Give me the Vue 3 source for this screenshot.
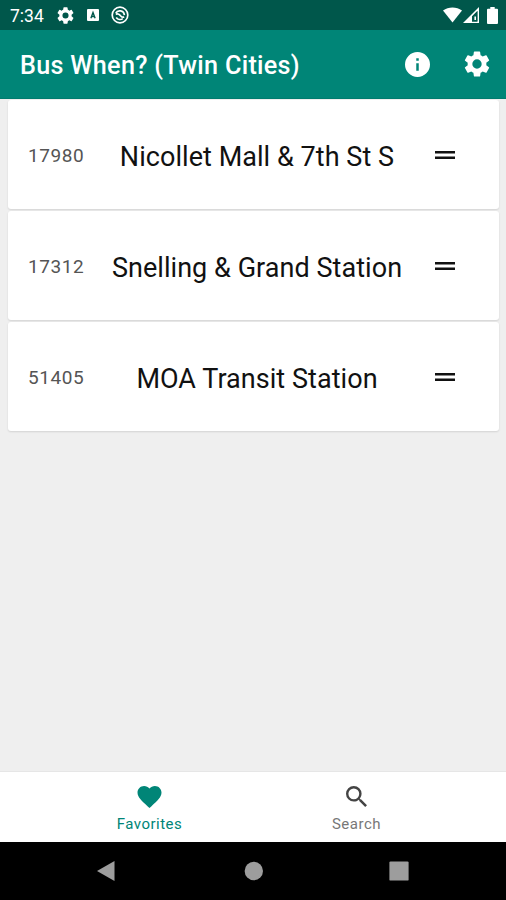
<script setup>
import { ref } from 'vue'

const stops = ref([
    { id: '17980', name: 'Nicollet Mall & 7th St S' },
    { id: '17312', name: 'Snelling & Grand Station' },
    { id: '51405', name: 'MOA Transit Station' }
])

const tab = ref('favorites')
const gearPath =
    'M19.14 12.94c.04-.3.06-.61.06-.94s-.02-.64-.07-.94l2.03-1.58a.49.49 0 0 0 .12-.61l-1.92-3.32a.49.49 0 0 0-.59-.22l-2.39.96a7 7 0 0 0-1.62-.94l-.36-2.54A.48.48 0 0 0 13.92 2.4h-3.84a.48.48 0 0 0-.48.41l-.36 2.54a7.3 7.3 0 0 0-1.62.94l-2.39-.96a.49.49 0 0 0-.59.22L2.72 8.87a.48.48 0 0 0 .12.61l2.03 1.58c-.05.3-.07.62-.07.94s.02.64.07.94l-2.03 1.58a.49.49 0 0 0-.12.61l1.92 3.32c.12.22.37.29.59.22l2.39-.96c.5.38 1.03.7 1.62.94l.36 2.54c.05.24.24.41.48.41h3.84c.24 0 .44-.17.48-.41l.36-2.54a7.3 7.3 0 0 0 1.62-.94l2.39.96c.22.08.47 0 .59-.22l1.92-3.32a.48.48 0 0 0-.12-.61zM12 15.6A3.6 3.6 0 1 1 12 8.4a3.6 3.6 0 0 1 0 7.2z'
</script>
<template>
    <div class="screen">
        <header class="status-bar">
            <span class="clock">7:34</span>
            <svg class="status-gear" viewBox="2 2 20 20"><path :d="gearPath" /></svg>
            <svg class="status-app" viewBox="0 0 12 12">
                <rect width="12" height="12" rx="1" />
                <path class="letter" d="M3.9 9.2 6 3.6l2.1 5.6M4.7 7.5h2.6" />
            </svg>
            <svg class="status-sync" viewBox="0 0 18 18">
                <circle cx="9" cy="9" r="7.8" />
                <path d="M4.8 7.2C6.6 3.6 12.8 4 13.4 9.2M4.8 8.4c2.4-1.6 4 .2 5 1.6 1 1.2 2.2 1.4 3.4 1M5.2 11.4c1.6 2.2 4.6 2.6 6.6 1.2" />
            </svg>
            <div class="status-right">
                <svg class="wifi" viewBox="0 0 20 16">
                    <path d="M0 3.3C5.8-1 14.2-1 20 3.3L10 15.8z" />
                </svg>
                <svg class="signal" viewBox="0 0 16 16">
                    <path fill-rule="evenodd" d="M16 0v16H0zM14.4 4 9 9.4v5h5.4z" />
                    <path class="shade" d="M14.4 4 9 9.4v5h5.4z" />
                    <path d="M11.4 9.4h1.6v3.6h-1.6z" />
                </svg>
                <svg class="battery" viewBox="0 0 11 17">
                    <path d="M3.3 0h4.4v1.8H10q1 0 1 1V16q0 1-1 1H1q-1 0-1-1V2.8q0-1 1-1h2.3z" />
                </svg>
            </div>
        </header>

        <div class="app-bar">
            <h1>Bus When? (Twin Cities)</h1>
            <svg class="info" viewBox="2 2 20 20">
                <path d="M12 2a10 10 0 1 0 0 20 10 10 0 0 0 0-20zm1 15h-2v-6h2zm0-8h-2V7h2z" />
            </svg>
            <svg class="settings" viewBox="2 2 20 20"><path :d="gearPath" /></svg>
        </div>

        <main class="stop-list">
            <div class="stop" v-for="stop in stops" :key="stop.id">
                <span class="stop-id">{{ stop.id }}</span>
                <span class="stop-name">{{ stop.name }}</span>
                <svg class="handle" viewBox="0 0 20 8">
                    <path d="M0 0h20v2.4H0zM0 5.6h20V8H0z" />
                </svg>
            </div>
        </main>

        <nav class="tabs">
            <div class="tab" :class="{ active: tab === 'favorites' }" @click="tab = 'favorites'">
                <svg class="heart" viewBox="2 3 20 18.35">
                    <path d="m12 21.35-1.45-1.32C5.4 15.36 2 12.28 2 8.5 2 5.42 4.42 3 7.5 3c1.74 0 3.41.81 4.5 2.09C13.09 3.81 14.76 3 16.5 3 19.58 3 22 5.42 22 8.5c0 3.78-3.4 6.86-8.55 11.54z" />
                </svg>
                <span>Favorites</span>
            </div>
            <div class="tab" :class="{ active: tab === 'search' }" @click="tab = 'search'">
                <svg class="search" viewBox="3 3 17.49 17.49">
                    <path d="M15.5 14h-.79l-.28-.27A6.47 6.47 0 0 0 16 9.5 6.5 6.5 0 1 0 9.5 16c1.61 0 3.09-.59 4.23-1.57l.27.28v.79l5 4.99L20.49 19zm-6 0a4.5 4.5 0 1 1 0-9 4.5 4.5 0 0 1 0 9z" />
                </svg>
                <span>Search</span>
            </div>
        </nav>

        <footer class="system-nav">
            <svg viewBox="0 0 20 22"><path d="M18.5 1v20L1 11z" /></svg>
            <svg viewBox="0 0 20 22"><circle cx="10.8" cy="11" r="9.2" /></svg>
            <svg viewBox="0 0 20 22"><rect x=".4" y="1.4" width="19.2" height="19.2" rx="1.2" /></svg>
        </footer>
    </div>
</template>
<style>
body {
    margin: 0;
}
</style>
<style scoped>
.screen {
    display: flex;
    flex-direction: column;
    width: 506px;
    height: 900px;
    overflow: hidden;
    background: #efefef;
    font-family: Roboto, 'Liberation Sans', sans-serif;
}

svg {
    display: block;
    flex: none;
    fill: currentColor;
}

.status-bar {
    display: flex;
    align-items: center;
    flex: none;
    height: 30px;
    padding: 0 8px 0 10px;
    box-sizing: border-box;
    background: #00574b;
    color: #fff;
}

.clock {
    width: 47px;
    padding-top: 2px;
    font-size: 17.5px;
    line-height: 28px;
}

.status-gear {
    width: 17px;
    height: 17px;
}

.status-app {
    width: 12px;
    height: 12px;
    margin-left: 13px;
}

.letter {
    fill: none;
    stroke: #00574b;
    stroke-width: 1.4;
}

.status-sync {
    width: 18px;
    height: 18px;
    margin-left: 12px;
    fill: none;
    stroke: #fff;
    stroke-width: 1.7;
}

.status-right {
    display: flex;
    align-items: center;
    margin-left: auto;
}

.wifi {
    width: 19px;
    height: 16px;
}

.signal {
    width: 16px;
    height: 16px;
    margin-left: 1px;
}

.shade {
    fill: #00574b;
}

.battery {
    width: 11px;
    height: 17px;
    margin-left: 8px;
}

.app-bar {
    display: flex;
    align-items: center;
    flex: none;
    height: 69px;
    padding: 0 16px 0 20px;
    box-sizing: border-box;
    background: #008577;
    border-bottom: 1px solid #007b6e;
    color: #fff;
}

h1 {
    flex: 1;
    margin: 4px 0 0;
    font-size: 25.2px;
    font-weight: 500;
    letter-spacing: 0.3px;
    line-height: 30px;
    white-space: nowrap;
}

.info {
    width: 25px;
    height: 25px;
}

.settings {
    width: 26px;
    height: 26px;
    margin-left: 34px;
}

.stop-list {
    display: flex;
    flex: 1;
    flex-direction: column;
    gap: 2px;
    padding: 1px 7px 0 8px;
}

.stop {
    display: flex;
    align-items: center;
    height: 109px;
    padding: 3px 44px 0 20px;
    box-sizing: border-box;
    border-radius: 3px;
    background: #fff;
    box-shadow: 0 1px 2px rgba(0, 0, 0, 0.12);
    color: #111;
}

.stop-id {
    width: 57px;
    margin-top: -2px;
    color: #555;
    font-size: 19px;
    letter-spacing: 0.55px;
}

.stop-name {
    flex: 1;
    margin-right: 6px;
    padding-top: 2px;
    font-size: 27px;
    letter-spacing: 0.05px;
    text-align: center;
    white-space: nowrap;
}

.handle {
    width: 20px;
    height: 8px;
    margin-top: -3px;
}

.tabs {
    display: flex;
    justify-content: center;
    flex: none;
    height: 71px;
    box-sizing: border-box;
    border-top: 1px solid #e6e6e6;
    background: #fff;
}

.tab {
    display: flex;
    align-items: center;
    flex-direction: column;
    width: 207px;
    color: #777;
    font-size: 15px;
    letter-spacing: 0.5px;
    line-height: 20px;
}

.tab.active {
    color: #008577;
}

.heart {
    width: 25px;
    height: 22px;
    margin: 14px 0 6px;
}

.search {
    width: 21px;
    height: 21px;
    margin: 14px 0 7px;
    color: #444;
}

.system-nav {
    display: flex;
    align-items: center;
    justify-content: space-between;
    flex: none;
    height: 58px;
    padding: 0 97px 0 96px;
    box-sizing: border-box;
    background: #000;
    color: #9d9d9d;
}

.system-nav svg {
    width: 20px;
    height: 22px;
}
</style>
